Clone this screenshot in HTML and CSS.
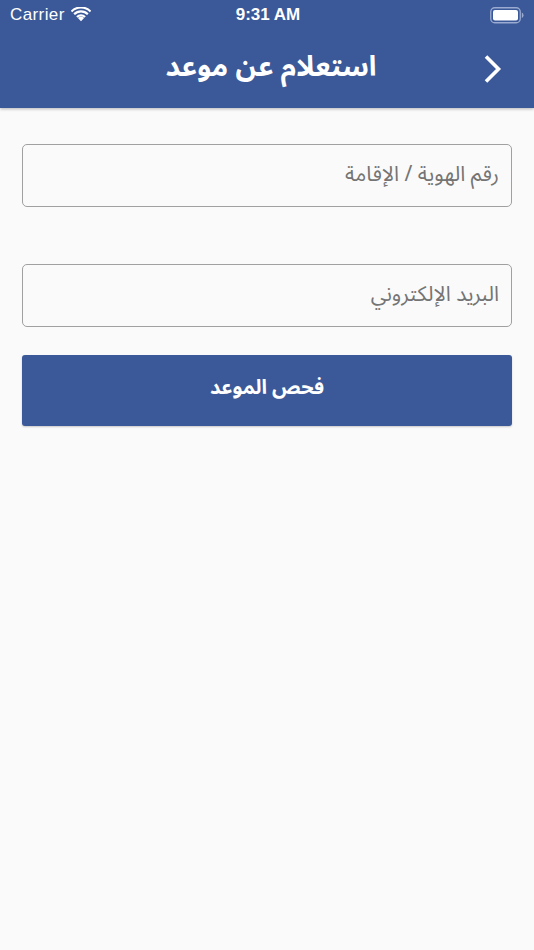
FILE: index.html
```html
<!DOCTYPE html>
<html lang="ar">
<head>
<meta charset="utf-8">
<title>استعلام عن موعد</title>
<link rel="stylesheet" href="styles.css">
</head>
<body>
<header class="appbar">
  <div class="status">
    <div class="status-left">
      <span class="carrier">Carrier</span>
      <svg class="wifi" width="20" height="15" viewBox="0 0 20 15">
        <path d="M10 14.2 L6.9 11 A4.4 4.4 0 0 1 13.1 11 Z" fill="#fff"/>
        <path d="M5.2 9.3 A6.8 6.8 0 0 1 14.8 9.3 L13.3 10.8 A4.7 4.7 0 0 0 6.7 10.8 Z" fill="#fff"/>
        <path d="M2.4 6.5 A10.8 10.8 0 0 1 17.6 6.5 L16.1 8 A8.7 8.7 0 0 0 3.9 8 Z" fill="#fff"/>
        <path d="M-0.3 3.7 A14.6 14.6 0 0 1 20.3 3.7 L18.8 5.2 A12.5 12.5 0 0 0 1.2 5.2 Z" fill="#fff"/>
      </svg>
    </div>
    <div class="time">9:31 AM</div>
    <div class="status-right">
      <svg class="battery" width="34" height="17" viewBox="0 0 34 17">
        <rect x="0.75" y="0.75" width="29.5" height="15" rx="4" fill="none" stroke="#9aaad0" stroke-width="1.3"/>
        <rect x="3" y="3" width="25" height="10.6" rx="2" fill="#fff"/>
        <path d="M31.8 5.5 Q33.5 6 33.5 8.3 Q33.5 10.6 31.8 11.1 Z" fill="#9aaad0"/>
      </svg>
    </div>
  </div>
  <div class="navbar">
    <svg class="chevron" width="22" height="30" viewBox="0 0 22 30">
      <path d="M4 2.5 L16.5 15 L4 27.5" fill="none" stroke="#fff" stroke-width="3.6" stroke-linecap="butt" stroke-linejoin="miter"/>
    </svg>
    <h1 class="title">استعلام عن موعد</h1>
  </div>
</header>
<main class="content">
  <form class="form" dir="rtl">
    <input class="field" type="text" placeholder="رقم الهوية / الإقامة">
    <input class="field field-second" type="email" placeholder="البريد الإلكتروني">
    <button class="submit" type="button">فحص الموعد</button>
  </form>
</main>
</body>
</html>
```
FILE: styles.css
```css
html, body {
  margin: 0;
  padding: 0;
  height: 100%;
}
body {
  background: #fafafa;
  font-family: "Noto Sans Arabic", "Noto Naskh Arabic", "DejaVu Sans", "Noto Sans", sans-serif;
}
.appbar {
  background: #3b5998;
  color: #fff;
  height: 108px;
  box-shadow: 0 1px 3px rgba(0,0,0,0.28);
  position: relative;
}
.status {
  height: 30px;
  display: grid;
  grid-template-columns: 1fr auto 1fr;
  align-items: center;
  padding: 0 10px;
  font-family: "Liberation Sans", Roboto, sans-serif;
  font-size: 17px;
}
.status-left {
  display: flex;
  align-items: center;
  gap: 6px;
}
.carrier {
  letter-spacing: 0.4px;
}
.wifi {
  margin-top: -2px;
}
.time {
  font-weight: 600;
  font-size: 17px;
  text-align: center;
  padding-left: 2px;
}
.status-right {
  display: flex;
  justify-content: flex-end;
}
.navbar {
  height: 78px;
  display: flex;
  flex-direction: row-reverse;
  align-items: center;
  justify-content: center;
  position: relative;
}
.chevron {
  position: absolute;
  right: 30px;
  top: 24px;
}
.title {
  margin: 0 0 2px 8px;
  font-size: 28px;
  font-weight: 700;
  line-height: 1;
  direction: rtl;
}
.content {
  padding: 36px 22px 0;
}
.form {
  display: flex;
  flex-direction: column;
}
.field {
  box-sizing: border-box;
  width: 100%;
  height: 63px;
  border: 1.5px solid #a0a0a0;
  border-radius: 5px;
  background: #fafafa;
  padding: 0 12px 4px;
  font-family: inherit;
  font-size: 21px;
  color: #222;
  text-align: right;
  direction: rtl;
  outline: none;
}
.field::placeholder {
  color: #747474;
}
.field-second {
  margin-top: 57px;
}
.submit {
  margin-top: 28px;
  height: 71px;
  width: 100%;
  border: none;
  border-radius: 3px;
  background: #3b5998;
  color: #fff;
  font-family: inherit;
  font-size: 20px;
  font-weight: 700;
  padding: 0 0 6px;
  box-shadow: 0 1px 2px rgba(0,0,0,0.2);
  cursor: pointer;
}
```
